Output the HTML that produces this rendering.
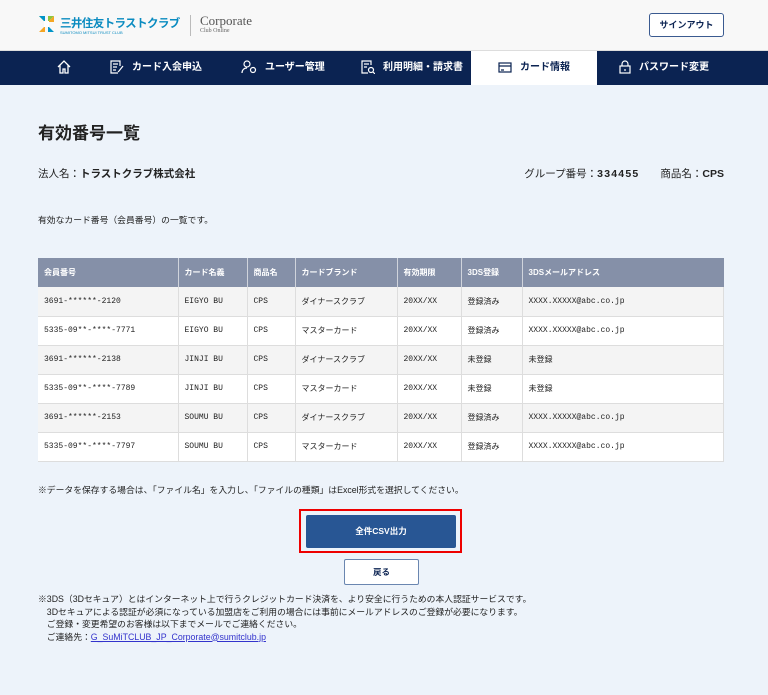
<!DOCTYPE html>
<html><head><meta charset="utf-8"><style>
*{margin:0;padding:0;box-sizing:border-box}
body{width:768px;height:695px;background:#edf3fa;font-family:"Liberation Sans","Noto Sans CJK JP",sans-serif;color:#222;position:relative;overflow:hidden}
.hdr{position:absolute;left:0;top:0;width:768px;height:51px;background:#f8f8f8;border-bottom:1px solid #ddd}
.nav{position:absolute;left:0;top:51px;width:768px;height:34px;background:#0b2352}
.nav div{position:absolute;top:0;height:34px;line-height:34px;color:#fff;font-size:10px;font-weight:bold;white-space:nowrap}
.nav svg{vertical-align:middle;margin-right:8px}
.act{background:#fff;color:#0b2352!important;left:471px;width:126px;text-align:center}
.abs{position:absolute;white-space:nowrap}
table{position:absolute;left:38px;top:258px;width:686px;border-collapse:collapse;font-size:8px}
th{background:#8590a8;color:#fff;text-align:left;height:29px;padding-left:6px;border-right:1px solid #d0d4dc;font-weight:bold}
td{height:29px;padding-left:6px;border-right:1px solid #ddd;border-bottom:1px solid #ddd;font-family:"Liberation Mono","Noto Sans CJK JP",monospace;font-size:8px}
tr:nth-child(even) td{background:#f4f4f4}tr:nth-child(odd) td{background:#fff}
</style></head><body>
<div class="hdr">
 <svg class="abs" style="left:38px;top:15px" width="17" height="18" viewBox="0 0 17 18"><path d="M1 1h6v6L1 1zM16 1h-6v6z" fill="#8dc63f"/><path d="M1 1l6 6v-6zM16 17h-6v-6z" fill="#0094c8"/><path d="M1 17h6v-6zM16 1l-6 6h6z" fill="#f5a623"/><rect x="6" y="6" width="5" height="6" fill="#fff"/></svg>
 <div class="abs" style="left:60px;top:15px;font-size:11.5px;color:#0a8bc0;font-weight:bold;letter-spacing:-0.6px">三井住友トラストクラブ</div>
 <div class="abs" style="left:60px;top:30px;font-size:4px;color:#0a8bc0">SUMITOMO MITSUI TRUST CLUB</div>
 <div class="abs" style="left:190px;top:15px;width:1px;height:21px;background:#bbb"></div>
 <div class="abs" style="left:200px;top:13px;font-family:'Liberation Serif',serif;font-size:13px;color:#555">Corporate</div>
 <div class="abs" style="left:200px;top:28px;font-family:'Liberation Serif',serif;font-size:6px;color:#666">Club Online</div>
 <div class="abs" style="left:649px;top:13px;width:75px;height:24px;border:1px solid #3a5a90;border-radius:3px;background:#fff;font-size:9px;text-align:center;line-height:22px;color:#0b2352;font-weight:bold">サインアウト</div>
</div>
<div class="nav">
 <div style="left:57px"><svg width="14" height="14" viewBox="0 0 14 14" fill="none" stroke="#fff" stroke-width="1.3"><path d="M1 7L7 1l6 6M3 5v8h3V9h2v4h3V5"/></svg></div>
 <div style="left:110px"><svg width="14" height="14" viewBox="0 0 14 14" fill="none" stroke="#fff" stroke-width="1.2"><path d="M10 6V1H1v12h7M3 4h5M3 7h4M3 10h3M13 6l-4 5-1 1"/></svg>カード入会申込</div>
 <div style="left:241px"><svg width="16" height="14" viewBox="0 0 16 14" fill="none" stroke="#fff" stroke-width="1.2"><circle cx="6" cy="4" r="3"/><path d="M1 13c0-3 2-5 5-5"/><circle cx="12" cy="10" r="2.5"/></svg>ユーザー管理</div>
 <div style="left:361px"><svg width="14" height="14" viewBox="0 0 14 14" fill="none" stroke="#fff" stroke-width="1.2"><path d="M10 5V1H1v12h6M3 4h5M3 7h3"/><circle cx="10" cy="10" r="2.5"/><path d="M12 12l2 2"/></svg>利用明細・請求書</div>
 <div class="act"><svg width="14" height="11" viewBox="0 0 14 11" fill="none" stroke="#0b2352" stroke-width="1.2"><rect x="1" y="1" width="12" height="9"/><path d="M1 4h12M3 8h3"/></svg>カード情報</div>
 <div style="left:619px"><svg width="12" height="14" viewBox="0 0 12 14" fill="none" stroke="#fff" stroke-width="1.2"><rect x="1" y="6" width="10" height="7"/><path d="M3 6V4a3 3 0 016 0v2M6 9v2"/></svg>パスワード変更</div>
</div>
<div class="abs" style="left:38px;top:119px;font-size:17px;font-weight:bold">有効番号一覧</div>
<div class="abs" style="left:38px;top:166px;font-size:10.5px">法人名：<b>トラストクラブ株式会社</b></div>
<div class="abs" style="right:44px;top:166px;font-size:10.5px">グループ番号：<b style="letter-spacing:1.2px">334455</b>　　商品名：<b>CPS</b></div>
<div class="abs" style="left:38px;top:213px;font-size:8.8px">有効なカード番号（会員番号）の一覧です。</div>
<table>
<tr><th style="width:140px">会員番号</th><th style="width:69px">カード名義</th><th style="width:48px">商品名</th><th style="width:102px">カードブランド</th><th style="width:64px">有効期限</th><th style="width:61px">3DS登録</th><th style="border-right:none">3DSメールアドレス</th></tr>
<tr><td>3691-******-2120</td><td>EIGYO BU</td><td>CPS</td><td>ダイナースクラブ</td><td>20XX/XX</td><td>登録済み</td><td>XXXX.XXXXX@abc.co.jp</td></tr>
<tr><td>5335-09**-****-7771</td><td>EIGYO BU</td><td>CPS</td><td>マスターカード</td><td>20XX/XX</td><td>登録済み</td><td>XXXX.XXXXX@abc.co.jp</td></tr>
<tr><td>3691-******-2138</td><td>JINJI BU</td><td>CPS</td><td>ダイナースクラブ</td><td>20XX/XX</td><td>未登録</td><td>未登録</td></tr>
<tr><td>5335-09**-****-7789</td><td>JINJI BU</td><td>CPS</td><td>マスターカード</td><td>20XX/XX</td><td>未登録</td><td>未登録</td></tr>
<tr><td>3691-******-2153</td><td>SOUMU BU</td><td>CPS</td><td>ダイナースクラブ</td><td>20XX/XX</td><td>登録済み</td><td>XXXX.XXXXX@abc.co.jp</td></tr>
<tr><td>5335-09**-****-7797</td><td>SOUMU BU</td><td>CPS</td><td>マスターカード</td><td>20XX/XX</td><td>登録済み</td><td>XXXX.XXXXX@abc.co.jp</td></tr>
</table>
<div class="abs" style="left:38px;top:483px;font-size:8.8px">※データを保存する場合は、「ファイル名」を入力し、「ファイルの種類」はExcel形式を選択してください。</div>
<div class="abs" style="left:299px;top:509px;width:163px;height:44px;border:2px solid #e00"></div>
<div class="abs" style="left:306px;top:515px;width:150px;height:33px;background:#285694;border-radius:2px;color:#fff;font-size:8.5px;font-weight:bold;text-align:center;line-height:33px">全件CSV出力</div>
<div class="abs" style="left:344px;top:559px;width:75px;height:26px;background:#fff;border:1px solid #6a86b0;border-radius:2px;font-size:8.5px;font-weight:bold;text-align:center;line-height:24px;color:#0b2352">戻る</div>
<div class="abs" style="left:38px;top:593px;font-size:8.8px;line-height:12.5px">※3DS（3Dセキュア）とはインターネット上で行うクレジットカード決済を、より安全に行うための本人認証サービスです。<br>　3Dセキュアによる認証が必須になっている加盟店をご利用の場合には事前にメールアドレスのご登録が必要になります。<br>　ご登録・変更希望のお客様は以下までメールでご連絡ください。<br>　ご連絡先：<span style="color:#3333cc;text-decoration:underline">G_SuMiTCLUB_JP_Corporate@sumitclub.jp</span></div>
</body></html>
